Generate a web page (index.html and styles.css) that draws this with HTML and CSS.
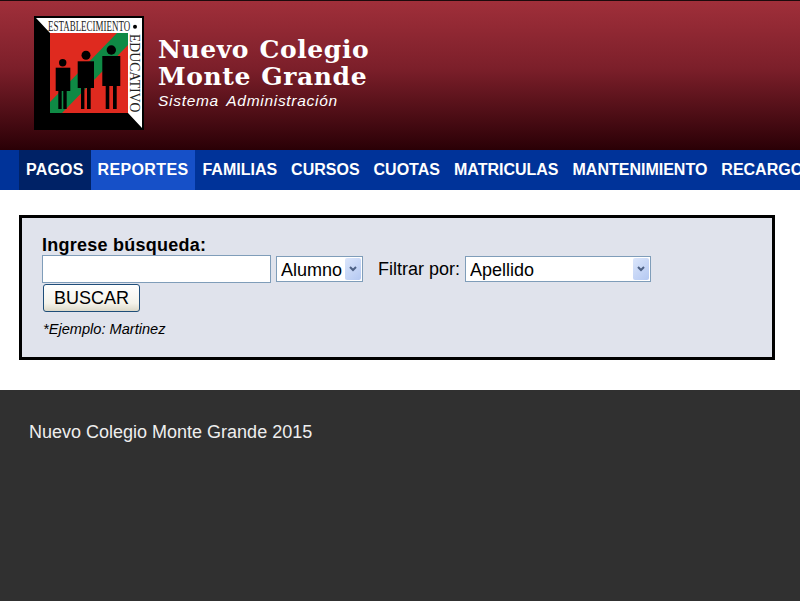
FILE: index.html
```html
<!DOCTYPE html>
<html lang="es">
<head>
  <meta charset="UTF-8">
  <meta name="viewport" content="width=device-width, initial-scale=1.0">
  <title>Nuevo Colegio Monte Grande</title>
  <link rel="stylesheet" href="styles.css">
</head>
<body>

  <header class="cabecera">
    <svg class="logo" width="110" height="114" viewBox="0 0 110 114">
      <rect width="110" height="114" fill="#000"/>
      <polygon points="2,2 108,2 108,112 94,97 94,17 16,17" fill="#fff"/>
      <rect x="16" y="17" width="78" height="80" fill="#df2a1f"/>
      <polygon points="16,86 83,17 94,17 94,29 28,97 16,97" fill="#0f8a45"/>
      <text class="logo-texto" transform="translate(14 15) scale(.6 1)" textLength="137" lengthAdjust="spacingAndGlyphs">ESTABLECIMIENTO</text>
      <circle cx="101" cy="10.7" r="2" fill="#000"/>
      <text class="logo-texto" transform="translate(96 18) rotate(90) scale(.8 1)" textLength="98" lengthAdjust="spacingAndGlyphs">EDUCATIVO</text>
      <circle cx="28.7" cy="46.7" r="3.7" fill="#000"/>
      <rect x="21.7" y="51.7" width="14.6" height="23.3" fill="#000"/>
      <rect x="24.3" y="74" width="3.4" height="19" fill="#000"/>
      <rect x="29.3" y="74" width="3.4" height="19" fill="#000"/>
      <circle cx="52" cy="39.3" r="4.5" fill="#000"/>
      <rect x="43.7" y="45.3" width="16.3" height="26.7" fill="#000"/>
      <rect x="47" y="71" width="3.4" height="22" fill="#000"/>
      <rect x="53" y="71" width="3.7" height="22" fill="#000"/>
      <circle cx="77.3" cy="34" r="4.7" fill="#000"/>
      <rect x="68.3" y="40" width="18" height="30" fill="#000"/>
      <rect x="71.7" y="69" width="3.6" height="24" fill="#000"/>
      <rect x="79" y="69" width="3.7" height="24" fill="#000"/>
    </svg>
    <div class="marca">
      <h1>Nuevo Colegio<br>Monte Grande</h1>
      <p>Sistema Administración</p>
    </div>
  </header>

  <nav class="menu">
    <a class="activo" href="#">PAGOS</a>
    <a class="resaltado" href="#">REPORTES</a>
    <a href="#">FAMILIAS</a>
    <a href="#">CURSOS</a>
    <a href="#">CUOTAS</a>
    <a href="#">MATRICULAS</a>
    <a href="#">MANTENIMIENTO</a>
    <a href="#">RECARGOS</a>
  </nav>

  <main class="contenido">
    <form class="busqueda">
      <label class="titulo" for="texto">Ingrese búsqueda:</label>
      <div class="fila">
        <input id="texto" class="entrada" type="text">
        <span class="combo combo-tipo">
          <select><option>Alumno</option></select>
          <svg class="flecha" width="16" height="22" viewBox="0 0 16 22"><path d="M5 9l3 3 3-3" fill="none" stroke="#4d6185" stroke-width="2"/></svg>
        </span>
        <label class="filtro">Filtrar por:</label>
        <span class="combo combo-filtro">
          <select><option>Apellido</option></select>
          <svg class="flecha" width="16" height="22" viewBox="0 0 16 22"><path d="M5 9l3 3 3-3" fill="none" stroke="#4d6185" stroke-width="2"/></svg>
        </span>
      </div>
      <button class="boton" type="button">BUSCAR</button>
      <p class="ejemplo">*Ejemplo: Martinez</p>
    </form>
  </main>

  <footer class="pie">
    <p>Nuevo Colegio Monte Grande 2015</p>
  </footer>

</body>
</html>
```

FILE: styles.css
```css
html, body {
  margin: 0;
  padding: 0;
}

body {
  font-family: "Liberation Sans", Arial, sans-serif;
  background-color: #fff;
  color: #000;
  height: 601px;
  overflow: hidden;
  display: flex;
  flex-direction: column;
}

.cabecera {
  height: 149px;
  border-top: 1px solid #1c0a0c;
  background: linear-gradient(#a02f3a, #7c1f2a 45%, #2a0006);
  display: flex;
  align-items: flex-start;
  padding-left: 34px;
  flex-shrink: 0;
}

.logo {
  margin-top: 15px;
}

.marca {
  margin: 35px 0 0 14px;
  color: #fff;
}

.marca h1 {
  margin: 0;
  font-family: "DejaVu Serif", serif;
  font-size: 25px;
  line-height: 27px;
  font-weight: bold;
  letter-spacing: 0.6px;
  word-spacing: 1px;
}

.marca p {
  margin: 2px 0 0;
  font-size: 15.5px;
  line-height: 17px;
  font-style: italic;
  font-weight: normal;
  letter-spacing: 0.7px;
  word-spacing: 3px;
}

.logo-texto {
  font-family: "Liberation Serif", serif;
  font-size: 14px;
  fill: #222;
}

.menu {
  height: 40px;
  background-color: #003399;
  display: flex;
  padding-left: 19px;
  overflow: hidden;
  flex-shrink: 0;
}

.menu a {
  color: #fff;
  text-decoration: none;
  font-weight: bold;
  font-size: 16px;
  line-height: 40px;
  padding: 0 7px;
  white-space: nowrap;
}

.menu a.activo {
  background-color: #002266;
  letter-spacing: 0.2px;
}

.menu a.resaltado {
  background-color: #1650c8;
  letter-spacing: 0.35px;
}

.contenido {
  height: 200px;
  padding: 25px 25px 30px 19px;
  box-sizing: border-box;
  flex-shrink: 0;
}

.busqueda {
  height: 145px;
  box-sizing: border-box;
  border: 3px solid #000;
  background-color: #e0e3ec;
  padding: 18px 20px 0;
}

.titulo {
  display: block;
  font-weight: bold;
  font-size: 18px;
  line-height: 19px;
  letter-spacing: 0.25px;
}

.fila {
  display: flex;
  align-items: center;
  height: 28px;
}

.entrada {
  width: 229px;
  height: 28px;
  box-sizing: border-box;
  border: 1px solid #7f9db9;
  background-color: #fff;
  padding: 0 3px;
  margin: 0;
}

.combo {
  position: relative;
  display: block;
  height: 26px;
}

.combo select {
  appearance: none;
  width: 100%;
  height: 26px;
  box-sizing: border-box;
  border: 1px solid #7f9db9;
  border-radius: 0;
  background-color: #fff;
  font-family: "Liberation Sans", Arial, sans-serif;
  font-size: 18px;
  color: #000;
  padding: 1px 0 0 4px;
  margin: 0;
}

.combo-tipo {
  width: 87px;
  margin-left: 5px;
}

.combo-filtro {
  width: 186px;
}

.flecha {
  position: absolute;
  top: 2px;
  right: 2px;
  background: linear-gradient(135deg, #dbe6fb, #b4c8f2);
  border-radius: 2px;
}

.filtro {
  font-size: 18px;
  margin: 0 5px 0 15px;
}

.boton {
  display: block;
  width: 97px;
  height: 28px;
  margin: 1px 0 0 1px;
  padding: 1px 0 0;
  border: 1px solid #1f4e79;
  border-radius: 3px;
  background: linear-gradient(#ffffff, #f4f3ea 70%, #dcd9c9);
  font-family: "Liberation Sans", Arial, sans-serif;
  font-size: 18px;
  color: #000;
}

.ejemplo {
  margin: 9px 0 0 1px;
  font-size: 14.6px;
  line-height: 17px;
  font-style: italic;
}

.pie {
  flex: 1;
  background-color: #303030;
  color: #eee;
  padding: 32px 0 0 29px;
  font-size: 18px;
}

.pie p {
  margin: 0;
  line-height: 20px;
}
```
